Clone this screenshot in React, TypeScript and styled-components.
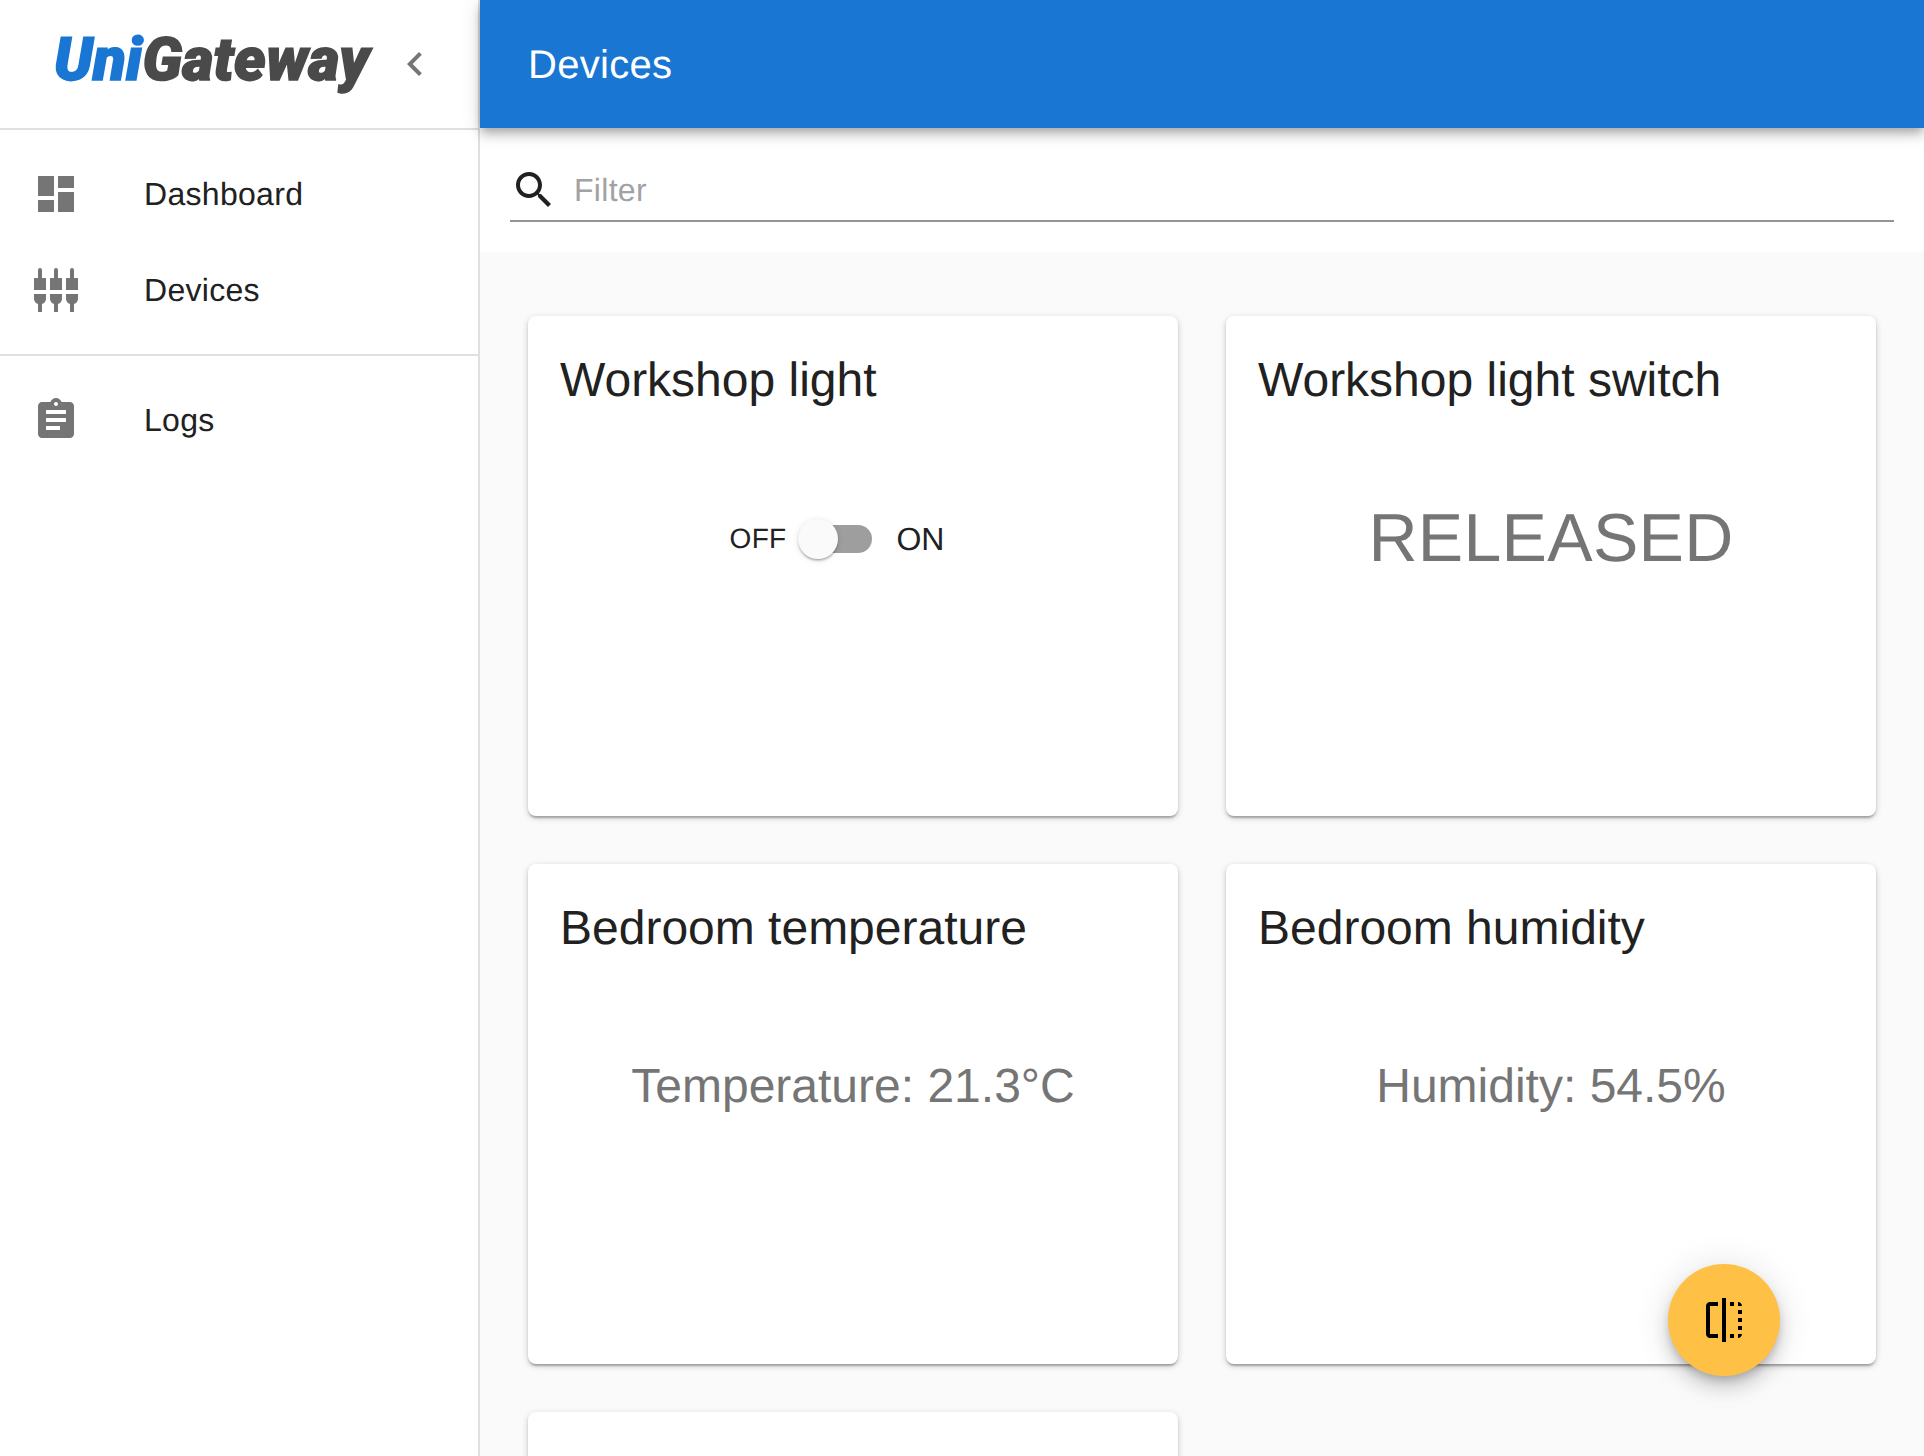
import React from "react";
import styled, { createGlobalStyle } from "styled-components";

const Global = createGlobalStyle`
  html, body { margin: 0; padding: 0; height: 100%; overflow: hidden; background: #fff; }
  body { font-family: "Liberation Sans", Arial, sans-serif; color: #212121; text-rendering: geometricPrecision; }
  * { box-sizing: border-box; }
`;

const Page = styled.div`
  display: flex;
  height: 1456px;
  overflow: hidden;
`;

const Sidebar = styled.aside`
  flex: 0 0 480px;
  width: 480px;
  min-width: 0;
  border-right: 2px solid #e0e0e0;
  background: #fff;
`;

const Brand = styled.div`
  height: 128px;
  display: flex;
  align-items: center;
  padding-left: 54px;
`;

const Logo = styled.div`
  flex: 0 0 313px;
  min-width: 0;
  margin-bottom: 8px;
  font-family: "Roboto", sans-serif;
  font-weight: 900;
  font-style: italic;
  font-size: 60px;
  line-height: 1;
  letter-spacing: 0.3px;
  color: #4a4a4a;
  white-space: nowrap;
  -webkit-text-stroke: 1.6px currentColor;
`;

const LogoAccent = styled.span`
  color: #1976d2;
`;

const CollapseButton = styled.button`
  flex: 0 0 96px;
  height: 96px;
  border: 0;
  padding: 0;
  background: none;
  display: flex;
  align-items: center;
  justify-content: center;
  color: #757575;
`;

const Divider = styled.hr`
  height: 2px;
  margin: 0;
  border: 0;
  background: #e0e0e0;
`;

const NavList = styled.nav`
  padding: 16px 0;
`;

const NavItem = styled.div`
  height: 96px;
  display: flex;
  align-items: center;
  padding-left: 32px;
  color: #757575;
`;

const NavIconBox = styled.span`
  flex: 0 0 112px;
  display: flex;
  align-items: center;
`;

const NavLabel = styled.span`
  font-size: 32px;
  line-height: 48px;
  letter-spacing: 0.3px;
  color: #212121;
`;

const Content = styled.div`
  flex: 1;
  min-width: 0;
  display: flex;
  flex-direction: column;
  background: #fafafa;
`;

const AppBar = styled.header`
  position: relative;
  z-index: 2;
  height: 128px;
  flex: 0 0 128px;
  display: flex;
  align-items: center;
  padding: 2px 0 0 48px;
  background: #1976d2;
  color: #fff;
  font-size: 40px;
  letter-spacing: 0.3px;
  box-shadow: 0 4px 8px -2px rgba(0, 0, 0, 0.2), 0 8px 10px 0 rgba(0, 0, 0, 0.14), 0 2px 20px 0 rgba(0, 0, 0, 0.12);
`;

const FilterBar = styled.div`
  flex: 0 0 124px;
  background: #fff;
  padding: 0 30px;
`;

const FilterField = styled.div`
  height: 94px;
  display: flex;
  align-items: center;
  padding-top: 32px;
  border-bottom: 2px solid #949494;
  color: #212121;
`;

const FilterInput = styled.input`
  flex: 1;
  margin-left: 16px;
  border: 0;
  outline: 0;
  padding: 0;
  background: none;
  font: 32px/48px "Liberation Sans", Arial, sans-serif;
  letter-spacing: 0.3px;
  text-rendering: geometricPrecision;
  color: #212121;
  &::placeholder { color: #a2a2a2; opacity: 1; }
`;

const CardGrid = styled.main`
  flex: 1;
  min-height: 0;
  overflow: hidden;
  display: grid;
  grid-template-columns: repeat(2, 650px);
  grid-auto-rows: 500px;
  gap: 48px;
  padding: 64px 48px;
`;

const Card = styled.section`
  height: 500px;
  background: #fff;
  border-radius: 8px;
  padding: 32px;
  box-shadow: 0 2px 6px 0 rgba(0, 0, 0, 0.2), 0 2px 2px 0 rgba(0, 0, 0, 0.14), 0 4px 2px -2px rgba(0, 0, 0, 0.12);
`;

const CardTitle = styled.h2`
  margin: 0;
  font-size: 48px;
  line-height: 65px;
  font-weight: 400;
  color: #212121;
`;

const CardBody = styled.div`
  height: 252px;
  display: flex;
  align-items: center;
  justify-content: center;
`;

const Reading = styled.div<{ $large?: boolean }>`
  font-size: ${(p) => (p.$large ? "68px" : "48px")};
  letter-spacing: ${(p) => (p.$large ? "0.3px" : "0")};
  line-height: 1.2;
  color: #757575;
`;

const ToggleRow = styled.div`
  display: flex;
  align-items: center;
  padding-right: 32px;
`;

const OffLabel = styled.span`
  font-size: 28px;
  letter-spacing: 0.3px;
  margin-right: 12px;
`;

const OnLabel = styled.span`
  font-size: 32px;
  margin-left: 24px;
`;

const Switch = styled.span`
  position: relative;
  width: 74px;
  height: 40px;
  display: block;
`;

const SwitchTrack = styled.span`
  position: absolute;
  left: 6px;
  right: 0;
  top: 6px;
  height: 28px;
  border-radius: 14px;
  background: #9e9e9e;
`;

const SwitchThumb = styled.span`
  position: absolute;
  left: 0;
  top: 0;
  width: 40px;
  height: 40px;
  border-radius: 50%;
  background: #fafafa;
  box-shadow: 0 2px 2px -1px rgba(0, 0, 0, 0.2), 0 2px 2px 0 rgba(0, 0, 0, 0.14), 0 1px 6px 0 rgba(0, 0, 0, 0.12);
`;

const Fab = styled.button`
  position: fixed;
  left: 1668px;
  top: 1264px;
  z-index: 3;
  width: 112px;
  height: 112px;
  padding: 0;
  border: 0;
  border-radius: 50%;
  display: flex;
  align-items: center;
  justify-content: center;
  color: #000;
  background: #ffc145;
  box-shadow: 0 6px 10px -2px rgba(0, 0, 0, 0.2), 0 12px 20px 0 rgba(0, 0, 0, 0.14), 0 2px 36px 0 rgba(0, 0, 0, 0.12);
`;

const Icon = ({ d, size = 48 }: { d: string; size?: number }) => (
  <svg width={size} height={size} viewBox="0 0 24 24" fill="currentColor" aria-hidden="true">
    <path d={d} />
  </svg>
);

const DevicesIcon = () => (
  <svg width="48" height="48" viewBox="0 0 48 48" fill="currentColor" aria-hidden="true">
    {[8, 24, 40].map((c) => (
      <g key={c}>
        <path d={`M${c - 2} 12 V4 a2 2 0 0 1 4 0 V12 h4 V24 h-12 V12 Z`} />
        <path d={`M${c - 6} 28 h12 V33 a6 6 0 0 1 -4 5 V46 h-4 V38 a6 6 0 0 1 -4 -5 Z`} />
      </g>
    ))}
  </svg>
);

const ICONS = {
  chevron: "M15.41 7.41L14 6l-6 6 6 6 1.41-1.41L10.83 12z",
  dashboard: "M3 13h8V3H3v10zm0 8h8v-6H3v6zm10 0h8V11h-8v10zm0-18v6h8V3h-8z",
  logs: "M19 3h-4.18C14.4 1.84 13.3 1 12 1c-1.3 0-2.4.84-2.82 2H5c-1.1 0-2 .9-2 2v14c0 1.1.9 2 2 2h14c1.1 0 2-.9 2-2V5c0-1.1-.9-2-2-2zm-7 0c.55 0 1 .45 1 1s-.45 1-1 1-1-.45-1-1 .45-1 1-1zm2 14H7v-2h7v2zm3-4H7v-2h10v2zm0-4H7V7h10v2z",
  search: "M15.5 14h-.79l-.28-.27C15.41 12.59 16 11.11 16 9.5 16 5.91 13.09 3 9.5 3S3 5.91 3 9.5 5.91 16 9.5 16c1.61 0 3.09-.59 4.23-1.57l.27.28v.79l5 4.99L20.49 19l-4.99-5zm-6 0C7.01 14 5 11.99 5 9.5S7.01 5 9.5 5 14 7.01 14 9.5 11.99 14 9.5 14z",
  flip: "M15 21h2v-2h-2v2zm4-12h2V7h-2v2zM3 5v14c0 1.1.9 2 2 2h4v-2H5V5h4V3H5c-1.1 0-2 .9-2 2zm16-2v2h2c0-1.1-.9-2-2-2zm-8 20h2V1h-2v22zm8-6h2v-2h-2v2zM15 5h2V3h-2v2zm4 8h2v-2h-2v2zm0 8c1.1 0 2-.9 2-2h-2v2z",
};

export default function App() {
  return (
    <>
      <Global />
      <Page>
        <Sidebar>
          <Brand>
            <Logo>
              <LogoAccent>Uni</LogoAccent>Gateway
            </Logo>
            <CollapseButton aria-label="Collapse">
              <Icon d={ICONS.chevron} />
            </CollapseButton>
          </Brand>
          <Divider />
          <NavList>
            <NavItem>
              <NavIconBox><Icon d={ICONS.dashboard} /></NavIconBox>
              <NavLabel>Dashboard</NavLabel>
            </NavItem>
            <NavItem>
              <NavIconBox><DevicesIcon /></NavIconBox>
              <NavLabel>Devices</NavLabel>
            </NavItem>
          </NavList>
          <Divider />
          <NavList>
            <NavItem>
              <NavIconBox><Icon d={ICONS.logs} /></NavIconBox>
              <NavLabel>Logs</NavLabel>
            </NavItem>
          </NavList>
        </Sidebar>
        <Content>
          <AppBar>Devices</AppBar>
          <FilterBar>
            <FilterField>
              <Icon d={ICONS.search} />
              <FilterInput placeholder="Filter" />
            </FilterField>
          </FilterBar>
          <CardGrid>
            <Card>
              <CardTitle>Workshop light</CardTitle>
              <CardBody>
                <ToggleRow>
                  <OffLabel>OFF</OffLabel>
                  <Switch>
                    <SwitchTrack />
                    <SwitchThumb />
                  </Switch>
                  <OnLabel>ON</OnLabel>
                </ToggleRow>
              </CardBody>
            </Card>
            <Card>
              <CardTitle>Workshop light switch</CardTitle>
              <CardBody><Reading $large>RELEASED</Reading></CardBody>
            </Card>
            <Card>
              <CardTitle>Bedroom temperature</CardTitle>
              <CardBody><Reading>Temperature: 21.3°C</Reading></CardBody>
            </Card>
            <Card>
              <CardTitle>Bedroom humidity</CardTitle>
              <CardBody><Reading>Humidity: 54.5%</Reading></CardBody>
            </Card>
            <Card />
          </CardGrid>
        </Content>
      </Page>
      <Fab aria-label="Flip"><Icon d={ICONS.flip} /></Fab>
    </>
  );
}
